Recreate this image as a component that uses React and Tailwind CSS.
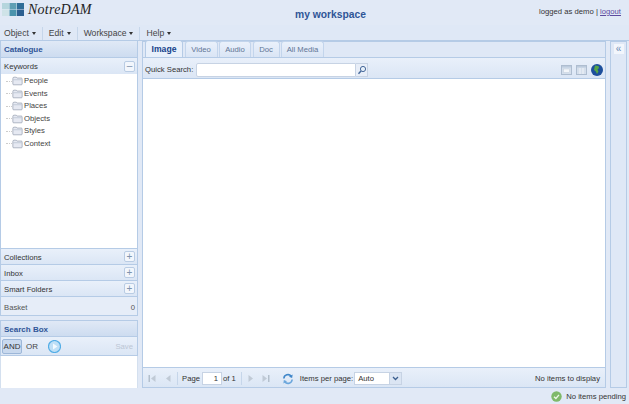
import React from "react";

function Logo() {
  return (
    <svg width="24" height="16" viewBox="0 0 24 16" className="shrink-0">
      <rect x="2" y="3" width="7" height="6" fill="#b5d5dd" />
      <rect x="2" y="9.5" width="7" height="6.5" fill="#cfe3e8" />
      <rect x="9.5" y="3" width="7" height="6" fill="#5f9fb4" />
      <rect x="9.5" y="9.5" width="7" height="6.5" fill="#4a93ac" />
      <rect x="17" y="3" width="7" height="6" fill="#2f6d98" />
      <rect x="17" y="9.5" width="7" height="6.5" fill="#2c5f90" />
    </svg>
  );
}

function MenuItem({ label }) {
  return (
    <div className="flex items-center gap-[3px]">
      <span>{label}</span>
      <span className="h-0 w-0 border-x-[2px] border-t-[3px] border-x-transparent border-t-[#333]"></span>
    </div>
  );
}

function Folder() {
  return (
    <svg width="11" height="10" viewBox="0 0 13 11" className="shrink-0">
      <path d="M1 2.5 Q1 1 2.5 1 H5 L6 2 H11 Q12 2 12 3.5 V9 Q12 10 11 10 H2 Q1 10 1 9 Z" fill="#e6e9f2" stroke="#8f99ab" strokeWidth="0.8" />
      <path d="M1.5 4 H11.5" stroke="#b4bccb" strokeWidth="0.8" />
    </svg>
  );
}

function TreeRow({ label }) {
  return (
    <div className="flex h-[12.5px] items-center pl-[5px]">
      <span className="w-[6px] border-t border-dotted border-[#ccc]"></span>
      <Folder />
      <span className="ml-[1px]">{label}</span>
    </div>
  );
}

function SquareBtn({ sign }) {
  return (
    <span className="flex h-[11px] w-[11px] items-center justify-center rounded-[2px] border border-[#b9cce4] bg-[#f2f6fc] text-[10px] leading-none text-[#7f93ad]">
      {sign}
    </span>
  );
}

function AccordionRow({ label }) {
  return (
    <div className="flex h-[16px] items-center justify-between border-b border-[#b5cbe6] bg-gradient-to-b from-[#e9f0fa] to-[#dbe6f5] pl-[3px] pr-[2px]">
      <span className="pt-[2px]">{label}</span>
      <SquareBtn sign="+" />
    </div>
  );
}

function Tab({ label, active, width }) {
  return (
    <div
      className={
        (active
          ? "h-[17px] border-[#b5cbe6] bg-[#e8f0fb] pt-[1px] text-[8.6px] font-bold text-[#15428b] "
          : "h-[16px] border-[#c3d5ec] bg-gradient-to-b from-[#eaf1fb] to-[#dae5f5] pt-[1px] text-[#5f7595] ") +
        "flex items-center justify-center rounded-t-[3px] border border-b-0 " +
        width
      }
    >
      {label}
    </div>
  );
}

function Sep() {
  return <span className="h-[13px] w-px shrink-0 bg-[#c6d6ea]"></span>;
}

function PagerArrow({ flip, bar }) {
  return (
    <svg width="8" height="9" viewBox="0 0 8 9" className={flip ? "shrink-0 -scale-x-100" : "shrink-0"}>
      {bar && <rect x="0.5" y="1" width="1.5" height="7" fill="#b3bfcc" />}
      <path d={bar ? "M7.5 1 L3 4.5 L7.5 8 Z" : "M6.5 1 L2 4.5 L6.5 8 Z"} fill="#c0cad6" />
    </svg>
  );
}

function Refresh() {
  return (
    <svg width="12" height="12" viewBox="0 0 13 13" className="shrink-0">
      <path d="M2 6 A4.5 4.5 0 0 1 10 3.5" fill="none" stroke="#3f86c9" strokeWidth="1.7" />
      <path d="M11.5 1.5 L11 5.5 L7.5 4 Z" fill="#3f86c9" />
      <path d="M11 7 A4.5 4.5 0 0 1 3 9.5" fill="none" stroke="#6aa6dc" strokeWidth="1.7" />
      <path d="M1.5 11.5 L2 7.5 L5.5 9 Z" fill="#6aa6dc" />
    </svg>
  );
}

function ViewIcon({ columns }) {
  return (
    <svg width="11" height="10" viewBox="0 0 11 10">
      <rect x="0.5" y="0.5" width="10" height="9" fill="#d5dfec" stroke="#aebdd0" />
      <rect x="1" y="1" width="9" height="1.5" fill="#bccbdd" />
      {columns ? (
        <path d="M4 3 V9 M7 3 V9" stroke="#f2f5f9" strokeWidth="1" />
      ) : (
        <rect x="2.5" y="4" width="6" height="3.5" fill="#f3f6fa" stroke="#c2cddb" strokeWidth="0.5" />
      )}
    </svg>
  );
}

function Globe() {
  return (
    <svg width="12" height="12" viewBox="0 0 12 12">
      <circle cx="6" cy="6" r="6" fill="#1d4f9c" />
      <path d="M4 1.5 L7.5 2 L8 4 L6.5 5.5 L7.5 7.5 L6 10 L4.8 7.5 L3 6 L3.5 3.5 Z" fill="#55a447" />
    </svg>
  );
}

export default function App() {
  return (
    <div className="flex h-[404px] w-[629px] flex-col overflow-hidden bg-[#e1e9f6] font-['Liberation_Sans',sans-serif] text-[7.7px] leading-none text-[#333]">
      <div className="flex h-[25px] shrink-0 items-start">
        <div className="flex w-[295px] items-start">
          <Logo />
          <span className="ml-[4px] mt-[3px] font-['Liberation_Serif',serif] text-[14px] italic tracking-[0.25px] text-[#222]">NotreDAM</span>
        </div>
        <span className="mt-[10px] text-[10.3px] font-bold text-[#2f5597]">my workspace</span>
        <div className="ml-auto mr-[8px] mt-[8px]">
          logged as demo | <span className="text-[#5b4a9e] underline">logout</span>
        </div>
      </div>

      <div className="flex h-[16px] shrink-0 items-center gap-[6px] border-b border-[#b5cbe6] bg-[#dfe8f6] pl-[4px] pt-[2px] text-[8.6px] text-[#444]">
        <MenuItem label="Object" />
        <Sep />
        <MenuItem label="Edit" />
        <Sep />
        <MenuItem label="Workspace" />
        <Sep />
        <MenuItem label="Help" />
      </div>

      <div className="flex min-h-0 flex-1 pr-[2px]">
        <div className="flex w-[138px] shrink-0 flex-col">
          <div className="flex h-[17px] shrink-0 items-center border-x border-b border-[#b5cbe6] bg-gradient-to-b from-[#e0e9f6] to-[#cddcf0] pl-[3px] pt-[2px] text-[8px] font-bold text-[#2f5597]">
            Catalogue
          </div>
          <div className="flex h-[16px] shrink-0 items-center justify-between border-x border-[#b5cbe6] bg-gradient-to-b from-[#e9f0fa] to-[#dbe6f5] pl-[3px] pr-[2px]">
            <span className="pt-[2px]">Keywords</span>
            <SquareBtn sign="–" />
          </div>
          <div className="flex flex-1 flex-col border-x border-b border-[#b5cbe6] bg-white pt-[1px] text-[#444]">
            <TreeRow label="People" />
            <TreeRow label="Events" />
            <TreeRow label="Places" />
            <TreeRow label="Objects" />
            <TreeRow label="Styles" />
            <TreeRow label="Context" />
          </div>
          <div className="shrink-0 border-x border-[#b5cbe6]">
            <AccordionRow label="Collections" />
            <AccordionRow label="Inbox" />
            <AccordionRow label="Smart Folders" />
          </div>
          <div className="flex h-[19px] shrink-0 items-center justify-between border-x border-b border-[#b5cbe6] bg-[#e6edf8] pl-[3px] pr-[2px] pt-[3px] text-[#555]">
            <span>Basket</span>
            <span>0</span>
          </div>
          <div className="mt-[4px] flex h-[17px] shrink-0 items-center border-x border-y border-[#b5cbe6] bg-gradient-to-b from-[#e0e9f6] to-[#cddcf0] pl-[3px] pt-[2px] text-[8px] font-bold text-[#2f5597]">
            Search Box
          </div>
          <div className="flex h-[19px] shrink-0 items-center border-x border-b border-[#b5cbe6] bg-gradient-to-b from-[#e9f0fa] to-[#dbe6f5] pl-[1px] pr-[4px]">
            <span className="flex h-[15px] w-[20px] items-center justify-center rounded-[2px] border border-[#9db7d8] bg-[#c9d9ee] pt-[2px] text-[8px]">AND</span>
            <span className="ml-[4px] pt-[2px] text-[8px] text-[#444]">OR</span>
            <span className="ml-[5px]"><Sep /></span>
            <svg width="13" height="13" viewBox="0 0 13 13" className="ml-[5px]">
              <circle cx="6.5" cy="6.5" r="6" fill="#bfe0f7" stroke="#54aee6" strokeWidth="1.2" />
              <path d="M5 3.5 L9.5 6.5 L5 9.5 Z" fill="#f2faff" />
            </svg>
            <span className="ml-auto pt-[2px] text-[#bcc6d4]">Save</span>
          </div>
          <div className="h-[32px] shrink-0 border-x border-[#d4e0ef] bg-white"></div>
        </div>

        <div className="ml-[4px] flex w-[464px] shrink-0 flex-col border-x border-b border-[#b5cbe6]">
          <div className="flex h-[17px] shrink-0 items-end gap-[1.5px] border-y border-[#b5cbe6] bg-[#dfe8f6] pl-[2px]">
            <Tab label="Image" active width="w-[38px]" />
            <Tab label="Video" width="w-[33px]" />
            <Tab label="Audio" width="w-[32px]" />
            <Tab label="Doc" width="w-[27px]" />
            <Tab label="All Media" width="w-[43px]" />
          </div>
          <div className="flex h-[21px] shrink-0 items-center border-b border-[#b5cbe6] bg-gradient-to-b from-[#e9f0fa] to-[#dbe6f5] pl-[2px] pr-[2px] text-[#333]">
            <span className="pt-[3px]">Quick Search:</span>
            <div className="ml-[3px] mt-[3px] flex h-[14px] w-[172px]">
              <div className="flex-1 rounded-l-[2px] border border-[#c7d3e4] bg-white"></div>
              <div className="flex w-[12px] items-center justify-center border-y border-r border-[#c7d3e4] bg-[#e8eef8]">
                <svg width="10" height="10" viewBox="0 0 10 10">
                  <circle cx="6" cy="4" r="2.6" fill="#e6f0fa" stroke="#47699a" strokeWidth="1" />
                  <path d="M4 6 L1.5 8.7" stroke="#47699a" strokeWidth="1.5" />
                </svg>
              </div>
            </div>
            <div className="ml-auto mt-[3px] flex items-center gap-[4px]">
              <ViewIcon />
              <ViewIcon columns />
              <Globe />
            </div>
          </div>
          <div className="flex-1 bg-white"></div>
          <div className="flex h-[20px] shrink-0 items-center gap-[5px] border-t border-[#b5cbe6] bg-gradient-to-b from-[#e9f0fa] to-[#dbe6f5] pl-[5px] pr-[5px] pt-[2px]">
            <div className="flex items-center gap-[8px]">
              <PagerArrow bar />
              <PagerArrow />
            </div>
            <Sep />
            <span className="-ml-[1px] pt-[1px]">Page</span>
            <span className="-ml-[3px] flex h-[13px] w-[20px] items-center justify-end border border-[#c7d3e4] bg-white pr-[3px] pt-[1px]">1</span>
            <span className="-ml-[4px] pt-[1px]">of 1</span>
            <Sep />
            <div className="flex items-center gap-[7px]">
              <PagerArrow flip />
              <PagerArrow flip bar />
            </div>
            <span className="ml-[2px]"><Sep /></span>
            <Refresh />
            <span className="-ml-[2px]"><Sep /></span>
            <span className="-ml-[2px] pt-[1px]">Items per page:</span>
            <div className="-ml-[4px] flex h-[13px] w-[48px]">
              <span className="flex flex-1 items-center border border-[#c7d3e4] bg-white pl-[3px]">Auto</span>
              <span className="flex w-[12px] items-center justify-center border-y border-r border-[#c7d3e4] bg-[#dbe5f3]">
                <svg width="7" height="5" viewBox="0 0 7 5">
                  <path d="M1 1 L3.5 3.5 L6 1" fill="none" stroke="#3b5f8f" strokeWidth="1.3" />
                </svg>
              </span>
            </div>
            <span className="ml-auto pt-[1px]">No items to display</span>
          </div>
        </div>

        <div className="ml-[4px] flex w-[17px] shrink-0 justify-center border border-[#b5cbe6] bg-[#dfe8f6] pt-[2px]">
          <span className="flex h-[10px] w-[10px] items-center justify-center bg-[#f2f6fc] text-[10px] leading-none text-[#6b8bb5]">«</span>
        </div>
      </div>

      <div className="flex h-[16px] shrink-0 items-center justify-end gap-[4px] pr-[3px] pt-[1px] text-[#333]">
        <svg width="11" height="11" viewBox="0 0 11 11">
          <circle cx="5.5" cy="5.5" r="5.2" fill="#7fb96a" />
          <path d="M3 5.7 L4.9 7.5 L8 3.8" fill="none" stroke="#eef7e8" strokeWidth="1.3" />
        </svg>
        <span className="pt-[1px]">No items pending</span>
      </div>
    </div>
  );
}
